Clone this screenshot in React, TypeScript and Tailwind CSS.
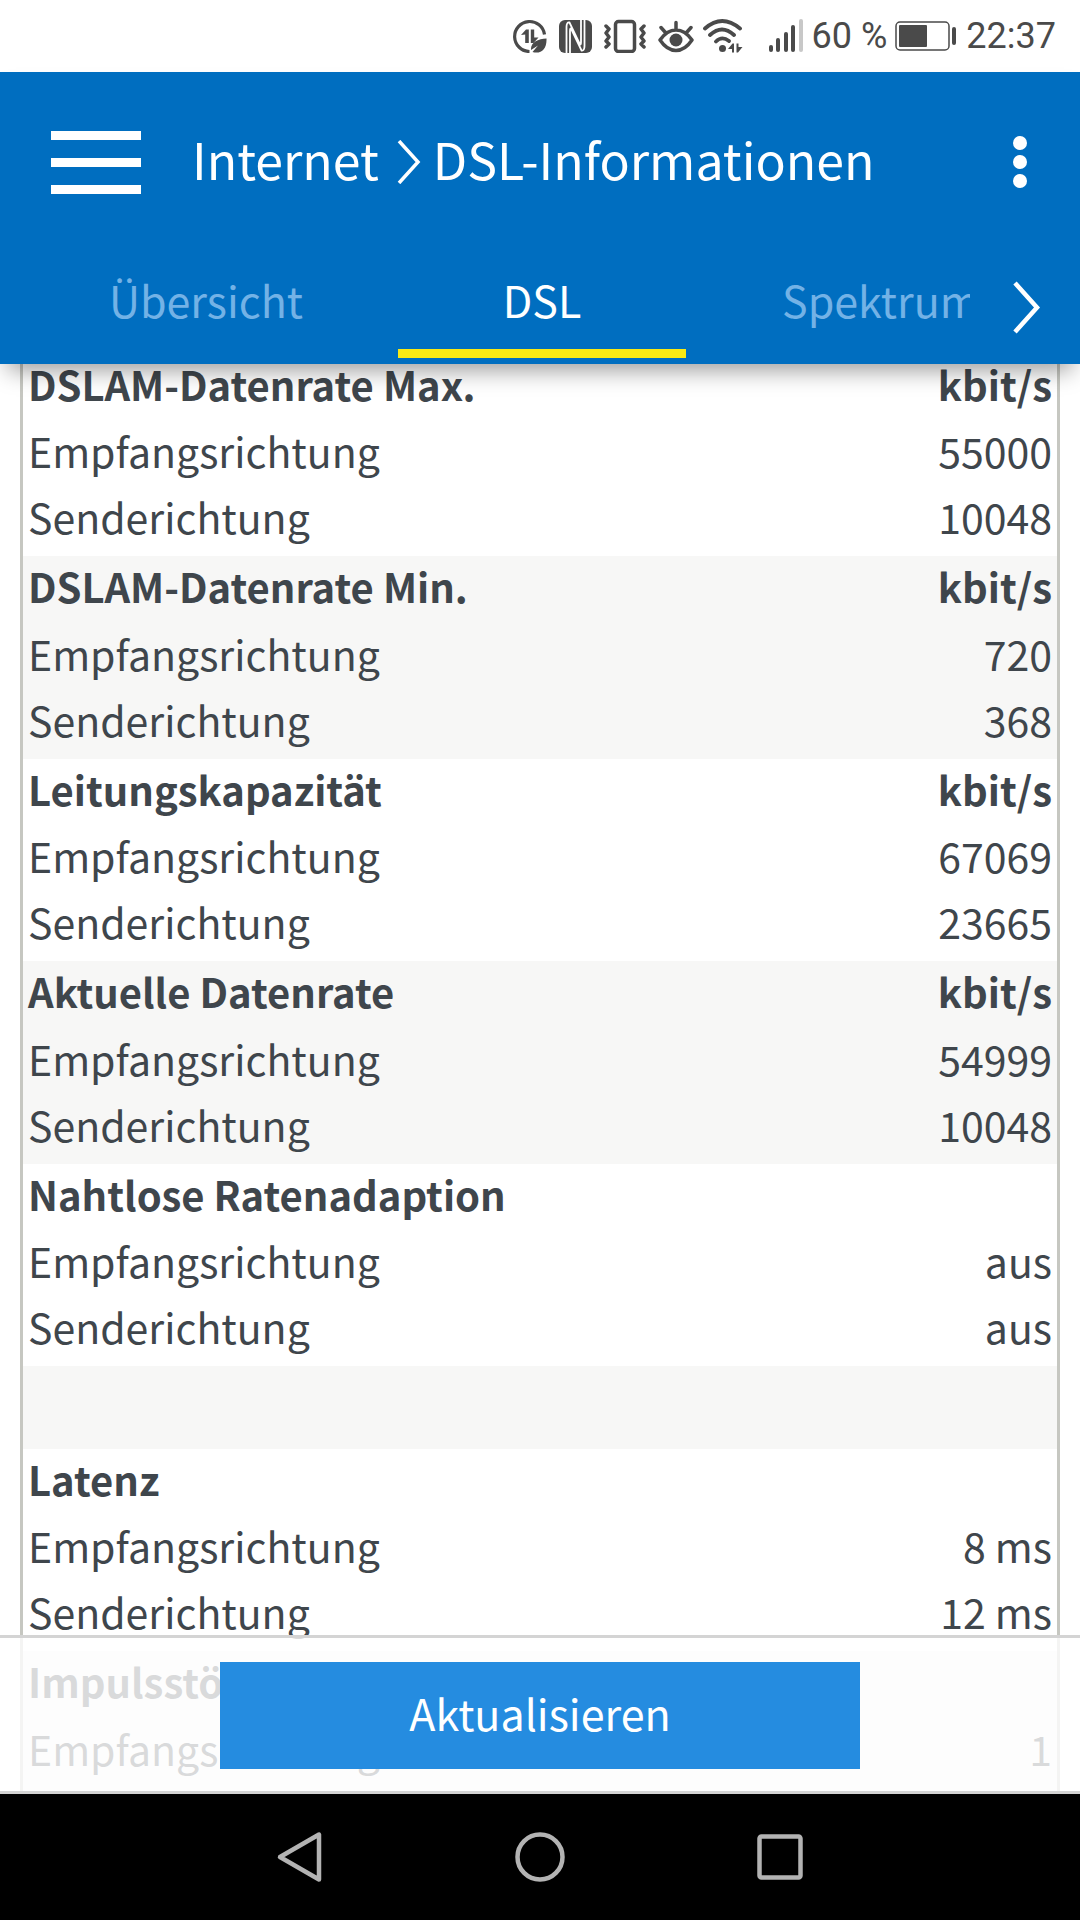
type Row = { label: string; value: string };
type Group = { title: string; unit?: string; rows: Row[] };

const groups: (Group | null)[] = [
  {
    title: "DSLAM-Datenrate Max.",
    unit: "kbit/s",
    rows: [
      { label: "Empfangsrichtung", value: "55000" },
      { label: "Senderichtung", value: "10048" },
    ],
  },
  {
    title: "DSLAM-Datenrate Min.",
    unit: "kbit/s",
    rows: [
      { label: "Empfangsrichtung", value: "720" },
      { label: "Senderichtung", value: "368" },
    ],
  },
  {
    title: "Leitungskapazität",
    unit: "kbit/s",
    rows: [
      { label: "Empfangsrichtung", value: "67069" },
      { label: "Senderichtung", value: "23665" },
    ],
  },
  {
    title: "Aktuelle Datenrate",
    unit: "kbit/s",
    rows: [
      { label: "Empfangsrichtung", value: "54999" },
      { label: "Senderichtung", value: "10048" },
    ],
  },
  {
    title: "Nahtlose Ratenadaption",
    rows: [
      { label: "Empfangsrichtung", value: "aus" },
      { label: "Senderichtung", value: "aus" },
    ],
  },
  // empty separator band
  null,
  {
    title: "Latenz",
    rows: [
      { label: "Empfangsrichtung", value: "8 ms" },
      { label: "Senderichtung", value: "12 ms" },
    ],
  },
  {
    title: "Impulsstörungsschutz",
    rows: [{ label: "Empfangsrichtung", value: "1" }],
  },
  null,
];

const StatusBar = () => {
  return (
    <div className="flex h-[72px] shrink-0 items-center justify-end bg-white pr-6 font-[Roboto,sans-serif] text-[36px] leading-none text-[#4a4a4a]">
      <svg className="mr-3 h-[34px] w-[34px]" viewBox="0 0 34 34" fill="none">
        <path
          d="M31.5 15.5A15 15 0 1 0 16.5 32.5"
          stroke="currentColor"
          strokeWidth="3.2"
        />
        <path
          d="M8 16L13 10.5H15.8V24H12.2V15.5ZM17.8 10.5H21.2V18.5H25.5L20.5 24H17.8Z"
          fill="currentColor"
        />
        <path
          d="M33.5 19.5C25 20 17.5 23 18 31L25 26.5L19.5 33C28 35.5 34 30 33.5 19.5Z"
          fill="currentColor"
        />
      </svg>
      <svg className="mr-3 h-[34px] w-[33px]" viewBox="0 0 33 34" fill="none">
        <rect y="1" width="33" height="33" rx="6" fill="currentColor" />
        <path
          d="M7.5 34V8Q7.5 3 10.5 3.5L20.5 24.5Q22 27 22 23V1M25.5 1V27Q25.5 32 22.5 31.5L12.5 10.5Q11 8 11 12V34"
          stroke="white"
          strokeWidth="1.8"
        />
      </svg>
      <svg className="mr-3 h-[34px] w-[42px]" viewBox="0 0 42 34" fill="none">
        <g stroke="currentColor" strokeWidth="3.5" strokeLinecap="round" strokeLinejoin="round">
          <rect x="11.5" y="2.5" width="19" height="30" rx="3" />
          <path d="M2 7L5 10L2 14L5 18L2 22L5 25L2 28M40 7L37 10L40 14L37 18L40 22L37 25L40 28" />
        </g>
      </svg>
      <svg className="mr-2 h-[34px] w-[36px]" viewBox="0 0 36 34" fill="none">
        <path
          d="M2 21Q9 11 18 11T34 21Q27 31.5 18 31.5T2 21ZM18 10V3.5M7 13L3 8.5M29 13L33 8.5"
          stroke="currentColor"
          strokeWidth="3.5"
          strokeLinecap="round"
          strokeLinejoin="round"
        />
        <circle cx="18" cy="21" r="6.5" fill="currentColor" />
      </svg>
      <svg className="mr-6 h-[34px] w-[42px]" viewBox="0 0 42 34" fill="none">
        <path
          d="M3 9.5Q20 -5.5 38 9.5M8 16Q20 5 32 16M14 22.5Q20 16.5 27 22"
          stroke="currentColor"
          strokeWidth="3.8"
          strokeLinecap="round"
        />
        <circle cx="20.5" cy="29.5" r="3.5" fill="currentColor" />
        <path d="M26 30L30.5 24.5H32V33.5H30V30ZM34.5 24.5H36.5V28H40.5L36 33.5H34.5Z" fill="currentColor" />
      </svg>
      <svg className="mr-2 h-[34px] w-[36px]" viewBox="0 0 36 34" fill="currentColor">
        <rect x="1" y="26" width="4" height="7" rx="2" />
        <rect x="8" y="19" width="4" height="14" rx="2" />
        <rect x="16" y="13" width="4" height="20" rx="2" />
        <rect x="23" y="6" width="4" height="27" rx="2" />
        <rect x="31" y="0" width="4" height="33" rx="2" fill="#c8c8c8" />
      </svg>
      <span>60 %</span>
      <svg className="mx-2 h-[34px] w-[63px]" viewBox="0 0 63 34" fill="none">
        <rect x="1" y="3" width="53" height="28" rx="4" stroke="currentColor" strokeWidth="1.5" />
        <rect x="4" y="6" width="28" height="22" rx="1" fill="currentColor" />
        <rect x="57" y="8" width="4" height="18" rx="2" fill="currentColor" />
      </svg>
      <span>22:37</span>
    </div>
  );
};

const Header = () => {
  return (
    <header className="relative z-10 flex h-[292px] shrink-0 flex-col bg-[#006ec0] text-white shadow-[0_14px_22px_-8px_rgba(0,0,0,0.4)]">
      <div className="flex h-[180px] items-center pr-[53px] pl-[51px]">
        <button aria-label="Menü" className="flex w-[90px] flex-col gap-[18px]">
          <span className="h-[9px] bg-white" />
          <span className="h-[9px] bg-white" />
          <span className="h-[9px] bg-white" />
        </button>
        <h1 className="ml-[51px] flex flex-1 items-center text-[50px] leading-[72px]">
          <a href="#internet" className="pb-2">
            Internet
          </a>
          <svg className="mr-3 ml-[18px] h-11 w-6" viewBox="0 0 24 44" fill="none">
            <path d="M2 1L21 22L2 43" stroke="white" strokeWidth="3.5" />
          </svg>
          <span className="pb-2">DSL-Informationen</span>
        </h1>
        <button aria-label="Mehr" className="flex flex-col gap-[5px]">
          <span className="size-[14px] rounded-full bg-white" />
          <span className="size-[14px] rounded-full bg-white" />
          <span className="size-[14px] rounded-full bg-white" />
        </button>
      </div>
      <div className="flex h-[112px] pb-[6px] text-[43px] leading-[62px]">
        <nav className="flex flex-1 gap-12 overflow-hidden pl-[62px]">
          <a href="#uebersicht" className="w-[288px] shrink-0 pt-4 text-center text-[#73b2e6]">
            Übersicht
          </a>
          <a
            href="#dsl"
            aria-current="page"
            className="w-[288px] shrink-0 border-b-[9px] border-[#f8ea14] pt-4 text-center"
          >
            DSL
          </a>
          <a href="#spektrum" className="shrink-0 pt-4 pl-12 text-[#73b2e6]">
            Spektrum
          </a>
        </nav>
        <button aria-label="Weitere Tabs" className="flex w-[110px] justify-center pt-[29px] pl-1">
          <svg className="h-[53px] w-7" viewBox="0 0 28 53" fill="none">
            <path d="M2 2L24 26.5L2 51" stroke="white" strokeWidth="4.5" />
          </svg>
        </button>
      </div>
    </header>
  );
};

const DslTable = () => {
  return (
    <table className="-mt-[10px] w-full border-separate border-spacing-0 border-x-[3px] border-[#c6c7c1] text-[41px] leading-[59px] text-[#3f464c]">
      {groups.map((group, i) =>
        group ? (
          <tbody key={i} className="group even:bg-[#f7f7f6]">
            <tr className="h-[67px] align-top text-[40px] leading-[61px] group-even:h-[68px]">
              <th className="pl-[5px] text-left font-semibold">{group.title}</th>
              <th className="pr-[5px] text-right font-semibold">{group.unit}</th>
            </tr>
            {group.rows.map((row) => (
              <tr key={row.label} className="h-[66px] align-top last:h-[69px]">
                <td className="pl-[5px]">{row.label}</td>
                <td className="pr-[5px] text-right">{row.value}</td>
              </tr>
            ))}
          </tbody>
        ) : (
          <tbody key={i} className="bg-[#f7f7f6]">
            <tr className="h-[83px]">
              <td colSpan={2} />
            </tr>
          </tbody>
        )
      )}
    </table>
  );
};

const NavigationBar = () => {
  return (
    <div className="flex h-[126px] shrink-0 items-center justify-center bg-black text-[#b3b3b3]">
      <button aria-label="Zurück" className="flex w-[240px] justify-center">
        <svg className="size-[52px]" viewBox="0 0 52 52" fill="none">
          <path
            d="M6 26L45 3.5V48.5Z"
            stroke="currentColor"
            strokeWidth="4.5"
            strokeLinejoin="round"
          />
        </svg>
      </button>
      <button aria-label="Startseite" className="flex w-[240px] justify-center">
        <svg className="size-[52px]" viewBox="0 0 52 52" fill="none">
          <circle cx="26" cy="26" r="22.5" stroke="currentColor" strokeWidth="4.5" />
        </svg>
      </button>
      <button aria-label="Letzte Apps" className="flex w-[240px] justify-center">
        <svg className="size-[52px]" viewBox="0 0 52 52" fill="none">
          <rect x="5.5" y="5.5" width="41" height="41" rx="2" stroke="currentColor" strokeWidth="4.5" />
        </svg>
      </button>
    </div>
  );
};

const App = () => {
  return (
    <div className="flex h-screen flex-col bg-white font-['Noto_Sans_CJK_SC',sans-serif]">
      <StatusBar />
      <Header />
      <main className="relative flex-1 overflow-hidden px-5">
        <DslTable />
        <div className="absolute inset-x-0 bottom-0 flex justify-center border-y-[3px] border-[#d4d4d4] bg-white/80 pt-6 pb-[22px]">
          <button className="h-[107px] w-[640px] bg-[#258ce0] pb-2 text-[43px] leading-[62px] text-white">
            Aktualisieren
          </button>
        </div>
      </main>
      <NavigationBar />
    </div>
  );
};

export default App;
